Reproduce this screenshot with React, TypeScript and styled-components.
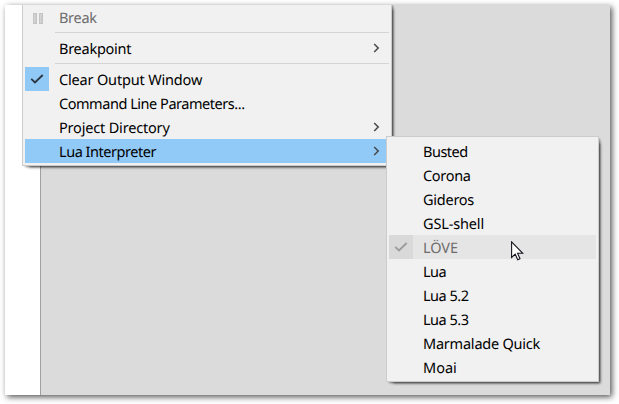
import React from 'react';
import styled, { createGlobalStyle, css } from 'styled-components';

const GlobalStyle = createGlobalStyle`
  * { box-sizing: border-box; }
  html, body { margin: 0; background: #fff; overflow: hidden; }
  body {
    font-family: "Noto Sans", "Open Sans", sans-serif;
    font-size: 14.5px;
    color: #000;
    text-rendering: geometricPrecision;
  }
`;

const Page = styled.div`
  width: 619px;
  height: 404px;
  padding: 5px 9px 9px 5px;
`;

const Window = styled.main`
  position: relative;
  display: grid;
  grid-template-columns: 36px 1fr;
  height: 390px;
  background: #dbdbdb;
  box-shadow: 2px 2px 6px rgba(0, 0, 0, 0.68);
`;

const Margin = styled.aside`
  background: #fff;
  border-right: 1px solid #a0a0a0;
`;

const menuSurface = css`
  position: absolute;
  padding: 2px;
  background: #f1f1f1;
  border: 1px solid #ccc;
  box-shadow: 4px 4px 3px -3px rgba(0, 0, 0, 0.65), 2px 2px 2px -1px rgba(0, 0, 0, 0.4);
`;

const MenuClip = styled.div`
  position: absolute;
  inset: 0;
  overflow: hidden;
`;

const MainMenu = styled.nav`
  ${menuSurface}
  left: 17px;
  top: -3px;
  width: 370px;
  height: 164px;
`;

const SubMenu = styled.nav`
  ${menuSurface}
  left: 381px;
  top: 131px;
  width: 213px;
  height: 246px;
`;

const Row = styled.div<{ $bg?: string; $muted?: boolean }>`
  display: grid;
  grid-template-columns: 24px 1fr 16px;
  column-gap: 10px;
  align-items: center;
  height: 24px;
  background: ${(p) => p.$bg ?? 'transparent'};
  color: ${(p) => (p.$muted ? '#6d6d6d' : '#000')};
`;

const IconCell = styled.span<{ $bg?: string }>`
  display: flex;
  align-items: center;
  justify-content: center;
  width: 24px;
  height: 24px;
  background: ${(p) => p.$bg ?? 'transparent'};
`;

const Label = styled.span<{ $spacing: number }>`
  padding-top: 2px;
  line-height: 22px;
  white-space: nowrap;
  letter-spacing: ${(p) => p.$spacing}px;
`;

const Separator = styled.hr`
  height: 1px;
  margin: 3px 0 3px 30px;
  border: 0;
  background: #d4d4d4;
`;

const Pointer = styled.svg`
  position: absolute;
  left: 506px;
  top: 236px;
`;

const PauseIcon = styled.svg`
  margin: 3px 0 0 2px;
`;

const Check = ({ color }: { color: string }) => (
  <svg width="14" height="12" viewBox="0 0 14 12" fill="none">
    <path d="M1.2 5.8 L5 9.5 L12.7 2" stroke={color} strokeWidth="1.8" />
  </svg>
);

const Chevron = () => (
  <svg width="7" height="10" viewBox="0 0 7 10" fill="none">
    <path d="M1.2 1 L5.2 5 L1.2 9" stroke="#484848" strokeWidth="1.5" />
  </svg>
);

const Pause = () => (
  <PauseIcon width="10" height="11" viewBox="0 0 10 11">
    <defs>
      <linearGradient id="pauseBar" x1="0" y1="0" x2="1" y2="0">
        <stop offset="0" stopColor="#dedede" />
        <stop offset="1" stopColor="#c2c2c2" />
      </linearGradient>
    </defs>
    <rect x="0.5" y="0.5" width="3" height="10" fill="url(#pauseBar)" stroke="#c4c4c4" />
    <rect x="6.5" y="0.5" width="3" height="10" fill="url(#pauseBar)" stroke="#c4c4c4" />
  </PauseIcon>
);

const interpreters: { name: string; spacing: number; active?: boolean }[] = [
  { name: 'Busted', spacing: -0.5 },
  { name: 'Corona', spacing: -0.3 },
  { name: 'Gideros', spacing: -0.25 },
  { name: 'GSL-shell', spacing: -0.15 },
  { name: 'LÖVE', spacing: -0.1, active: true },
  { name: 'Lua', spacing: -0.5 },
  { name: 'Lua 5.2', spacing: -0.5 },
  { name: 'Lua 5.3', spacing: -0.5 },
  { name: 'Marmalade Quick', spacing: -0.22 },
  { name: 'Moai', spacing: 0 },
];

export default function App() {
  return (
    <>
      <GlobalStyle />
      <Page>
        <Window>
          <Margin />
          <MenuClip>
            <MainMenu>
              <Row $muted>
                <IconCell><Pause /></IconCell>
                <Label $spacing={-0.3}>Break</Label>
              </Row>
              <Separator />
              <Row>
                <IconCell />
                <Label $spacing={-0.25}>Breakpoint</Label>
                <Chevron />
              </Row>
              <Separator />
              <Row>
                <IconCell $bg="#90c8f6"><Check color="#2b3640" /></IconCell>
                <Label $spacing={-0.17}>Clear Output Window</Label>
              </Row>
              <Row>
                <IconCell />
                <Label $spacing={-0.46}>Command Line Parameters...</Label>
              </Row>
              <Row>
                <IconCell />
                <Label $spacing={-0.18}>Project Directory</Label>
                <Chevron />
              </Row>
              <Row $bg="#91c9f7">
                <IconCell />
                <Label $spacing={-0.46}>Lua Interpreter</Label>
                <Chevron />
              </Row>
            </MainMenu>
          </MenuClip>
          <SubMenu>
            {interpreters.map((item) => (
              <Row key={item.name} $bg={item.active ? '#e5e5e5' : undefined} $muted={item.active}>
                <IconCell $bg={item.active ? '#d9d9d9' : undefined}>
                  {item.active && <Check color="#9b9b9b" />}
                </IconCell>
                <Label $spacing={item.spacing}>{item.name}</Label>
              </Row>
            ))}
          </SubMenu>
          <Pointer width="13" height="20" viewBox="0 0 13 20">
            <path
              d="M0.6 0.9 V16.4 L4.2 13.1 L6.7 18.8 L9 17.8 L6.6 12.3 H11.8 Z"
              fill="#fff"
              stroke="#15151f"
              strokeWidth="1.1"
            />
          </Pointer>
        </Window>
      </Page>
    </>
  );
}
